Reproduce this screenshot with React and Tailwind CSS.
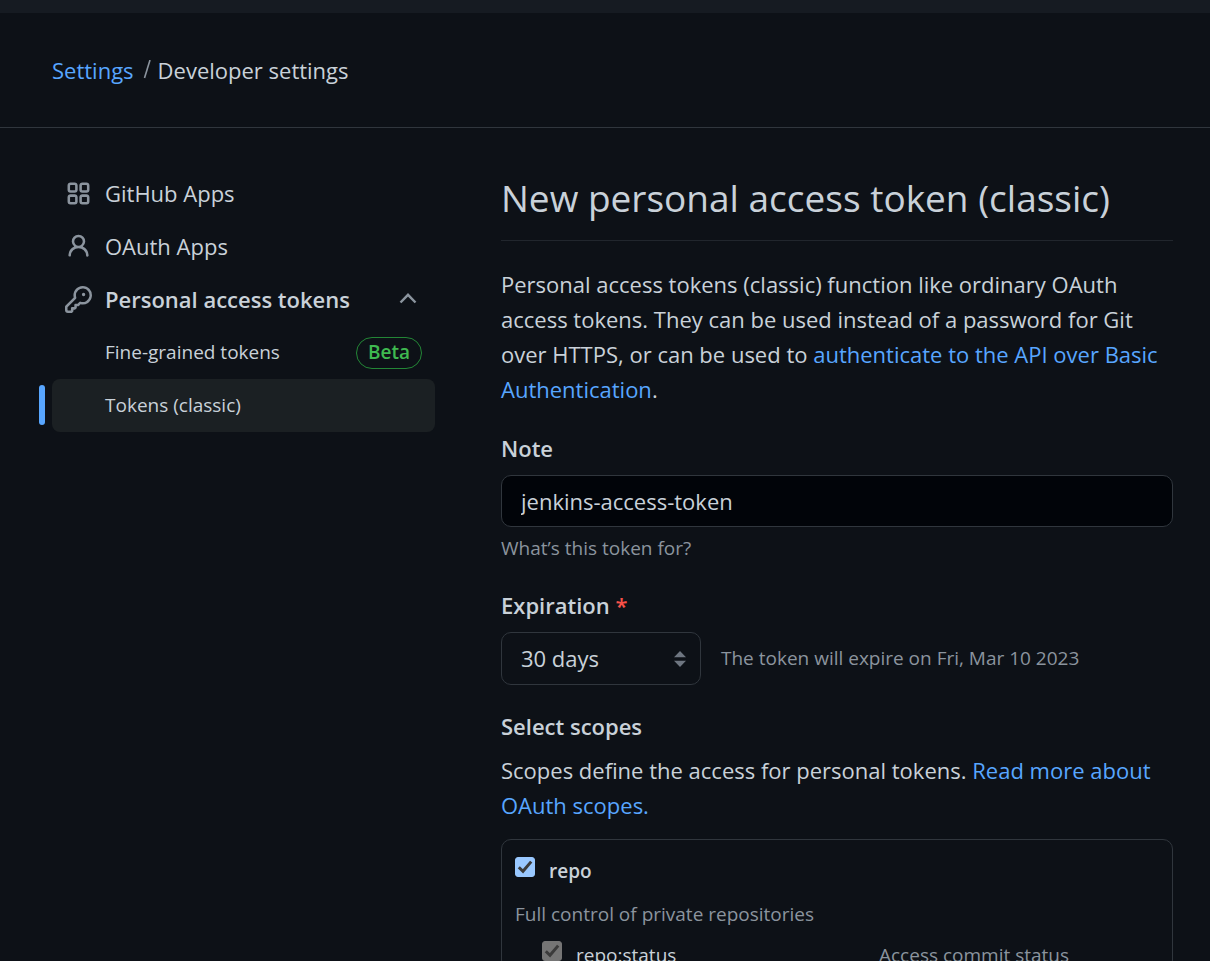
import React from "react";

const ICONS = {
  apps: "M1.5 3.25c0-.966.784-1.75 1.75-1.75h2.5c.966 0 1.75.784 1.75 1.75v2.5A1.75 1.75 0 0 1 5.75 7.5h-2.5A1.75 1.75 0 0 1 1.5 5.75Zm7 0c0-.966.784-1.75 1.75-1.75h2.5c.966 0 1.75.784 1.75 1.75v2.5a1.75 1.75 0 0 1-1.75 1.75h-2.5A1.75 1.75 0 0 1 8.5 5.75Zm-7 7c0-.966.784-1.75 1.75-1.75h2.5c.966 0 1.75.784 1.75 1.75v2.5a1.75 1.75 0 0 1-1.75 1.75h-2.5a1.75 1.75 0 0 1-1.75-1.75Zm7 0c0-.966.784-1.75 1.75-1.75h2.5c.966 0 1.75.784 1.75 1.75v2.5a1.75 1.75 0 0 1-1.75 1.75h-2.5a1.75 1.75 0 0 1-1.75-1.75ZM3.25 3a.25.25 0 0 0-.25.25v2.5c0 .138.112.25.25.25h2.5A.25.25 0 0 0 6 5.75v-2.5A.25.25 0 0 0 5.75 3Zm7 0a.25.25 0 0 0-.25.25v2.5c0 .138.112.25.25.25h2.5a.25.25 0 0 0 .25-.25v-2.5a.25.25 0 0 0-.25-.25Zm-7 7a.25.25 0 0 0-.25.25v2.5c0 .138.112.25.25.25h2.5a.25.25 0 0 0 .25-.25v-2.5a.25.25 0 0 0-.25-.25Zm7 0a.25.25 0 0 0-.25.25v2.5c0 .138.112.25.25.25h2.5a.25.25 0 0 0 .25-.25v-2.5a.25.25 0 0 0-.25-.25Z",
  person:
    "M10.561 8.073a6.005 6.005 0 0 1 3.432 5.142.75.75 0 1 1-1.498.07 4.5 4.5 0 0 0-8.99 0 .75.75 0 0 1-1.498-.07 6.004 6.004 0 0 1 3.431-5.142 3.999 3.999 0 1 1 5.123 0ZM10.5 5a2.5 2.5 0 1 0-5 0 2.5 2.5 0 0 0 5 0Z",
  key: "M10.5 0a5.499 5.499 0 1 1-1.288 10.848l-.932.932a.749.749 0 0 1-.53.22H7v.75a.749.749 0 0 1-.22.53l-.5.5a.749.749 0 0 1-.53.22H5v.75a.749.749 0 0 1-.22.53l-.5.5a.749.749 0 0 1-.53.22h-2A1.75 1.75 0 0 1 0 14.25v-2c0-.199.079-.389.22-.53l4.932-4.932A5.5 5.5 0 0 1 10.5 0Zm-4 5.5c-.001.431.069.86.205 1.269a.75.75 0 0 1-.181.768L1.5 12.56v1.69c0 .138.112.25.25.25h1.69l.06-.06v-1.19a.75.75 0 0 1 .75-.75h1.19l.06-.06v-1.19a.75.75 0 0 1 .75-.75h1.19l1.023-1.025a.75.75 0 0 1 .768-.18A4 4 0 1 0 6.5 5.5ZM11 6a1 1 0 1 1 0-2 1 1 0 0 1 0 2Z",
};

function Icon({ name }) {
  return (
    <svg viewBox="0 0 16 16" className="size-[27px] shrink-0 fill-[#8b949e]" fillRule="evenodd" aria-hidden="true">
      <path d={ICONS[name]} />
    </svg>
  );
}

function Checkbox({ id, disabled }) {
  return (
    <span className="grid size-5 shrink-0">
      <input
        id={id}
        type="checkbox"
        defaultChecked
        disabled={disabled}
        className="peer col-start-1 row-start-1 size-5 appearance-none rounded-[3px] border border-[#767676] checked:border-[#99c8ff] checked:bg-[#99c8ff] disabled:border-[#757575] disabled:bg-[#757575]"
      />
      <svg viewBox="0 0 20 20" className="pointer-events-none invisible col-start-1 row-start-1 size-5 peer-checked:visible" aria-hidden="true">
        <path d="M3.8 10.2 8 14.3 16.2 4.6" fill="none" stroke="#3b3b3b" strokeWidth="3" />
      </svg>
    </span>
  );
}

const navRow = "flex h-[53px] items-center gap-[13px] rounded-lg px-[13px]";
const subRow = "flex h-[53px] items-center justify-between rounded-lg px-[13px]";
const link = "text-[#58a6ff] hover:underline";

export default function App() {
  return (
    <div className="h-screen overflow-hidden bg-[#0d1117] font-['Open_Sans','Noto_Sans',sans-serif] text-[22px] leading-[35px] text-[#c9d1d9]">
      <div className="h-[13px] bg-[#161b22]" />
      <header className="flex h-[115px] items-center border-b border-[#30363d] px-[52px]">
        <nav aria-label="Breadcrumb" className="flex items-center">
          <a href="#settings" className={link}>Settings</a>
          <svg viewBox="0 0 24 20" className="h-5 w-6" aria-hidden="true">
            <path d="M10.5 18 16 0" fill="none" stroke="#8b949e" strokeWidth="1.6" />
          </svg>
          <span>Developer settings</span>
        </nav>
      </header>

      <div className="flex gap-[66px] pl-[52px] pr-[37px]">
        <nav aria-label="Developer settings" className="w-[383px] shrink-0 pt-[39px]">
          <ul>
            <li>
              <a href="#apps" className={navRow}><Icon name="apps" />GitHub Apps</a>
            </li>
            <li>
              <a href="#oauth" className={navRow}><Icon name="person" />OAuth Apps</a>
            </li>
            <li>
              <button type="button" aria-expanded="true" className={navRow + " w-full text-left font-semibold"}>
                <Icon name="key" />
                <span className="grow whitespace-nowrap">Personal access tokens</span>
                <svg viewBox="0 0 26 26" className="size-[26px]" aria-hidden="true">
                  <path d="m4.5 15.5 7.5-7.7 7.5 7.7" fill="none" stroke="#8b949e" strokeWidth="2.4" />
                </svg>
              </button>
              <ul className="text-[19px]">
                <li>
                  <a href="#fine-grained" className={subRow}>
                    <span className="pl-10">Fine-grained tokens</span>
                    <span className="flex h-8 items-center rounded-full border border-[#238636] px-[11px] font-semibold text-[#3fb950]">Beta</span>
                  </a>
                </li>
                <li className="relative">
                  <span className="absolute -left-[13px] top-1.5 h-10 w-1.5 rounded-full bg-[#58a6ff]" />
                  <a href="#classic" aria-current="page" className={subRow + " bg-[#1b2023]"}>
                    <span className="pl-10">Tokens (classic)</span>
                  </a>
                </li>
              </ul>
            </li>
          </ul>
        </nav>

        <main className="min-w-0 grow pt-10">
          <h1 className="border-b border-[#21262d] pb-3 text-[37px] leading-[60px]">New personal access token (classic)</h1>

          <p className="mt-[26px]">
            Personal access tokens (classic) function like ordinary OAuth access tokens. They can be used instead of a
            password for Git over HTTPS, or can be used to{" "}
            <a href="#authenticate" className={link}>authenticate to the API over Basic Authentication</a>.
          </p>

          <form>
            <label htmlFor="note" className="mt-6 block font-semibold">Note</label>
            <input
              id="note"
              type="text"
              defaultValue="jenkins-access-token"
              className="mt-[9px] block h-[52px] w-full rounded-[10px] border border-[#30363d] bg-[#010409] px-[19px] outline-none"
            />
            <p className="mt-1 text-[19px] text-[#8b949e]">What’s this token for?</p>

            <label htmlFor="expiration" className="mt-[22px] block font-semibold leading-[35px]">
              Expiration <span className="text-[#f85149]">*</span>
            </label>
            <div className="mt-[9px] flex items-center gap-5">
              <span className="grid w-[200px] shrink-0 items-center">
                <select
                  id="expiration"
                  defaultValue="30"
                  className="col-start-1 row-start-1 h-[53px] w-full appearance-none rounded-[10px] border border-[#30363d] bg-[#0d1117] px-[19px] outline-none"
                >
                  <option value="7">7 days</option>
                  <option value="30">30 days</option>
                  <option value="60">60 days</option>
                  <option value="90">90 days</option>
                </select>
                <svg viewBox="0 0 12 16" className="pointer-events-none col-start-1 row-start-1 mr-[15px] h-4 w-3 justify-self-end fill-[#6e7681]" aria-hidden="true">
                  <path d="M6 0 12 6.2H0ZM0 9.8H12L6 16Z" />
                </svg>
              </span>
              <p className="text-[19px] text-[#8b949e]">The token will expire on Fri, Mar 10 2023</p>
            </div>

            <h2 className="mt-6 font-semibold">Select scopes</h2>
            <p className="mt-[9px]">
              Scopes define the access for personal tokens.{" "}
              <a href="#scopes" className={link}>Read more about OAuth scopes.</a>
            </p>

            <div className="mt-4 rounded-[10px] border border-[#30363d] px-[13px] pt-[17px] text-[19px]">
              <div className="flex gap-[14px] leading-7">
                <Checkbox id="repo" />
                <label htmlFor="repo" className="font-semibold">repo</label>
              </div>
              <p className="mt-3 text-[#8b949e]">Full control of private repositories</p>
              <div className="mt-[9px] flex gap-[14px] pl-[27px] leading-7">
                <Checkbox id="repo-status" disabled />
                <label htmlFor="repo-status" className="w-[289px]">repo:status</label>
                <span className="text-[#8b949e]">Access commit status</span>
              </div>
            </div>
          </form>
        </main>
      </div>
    </div>
  );
}
